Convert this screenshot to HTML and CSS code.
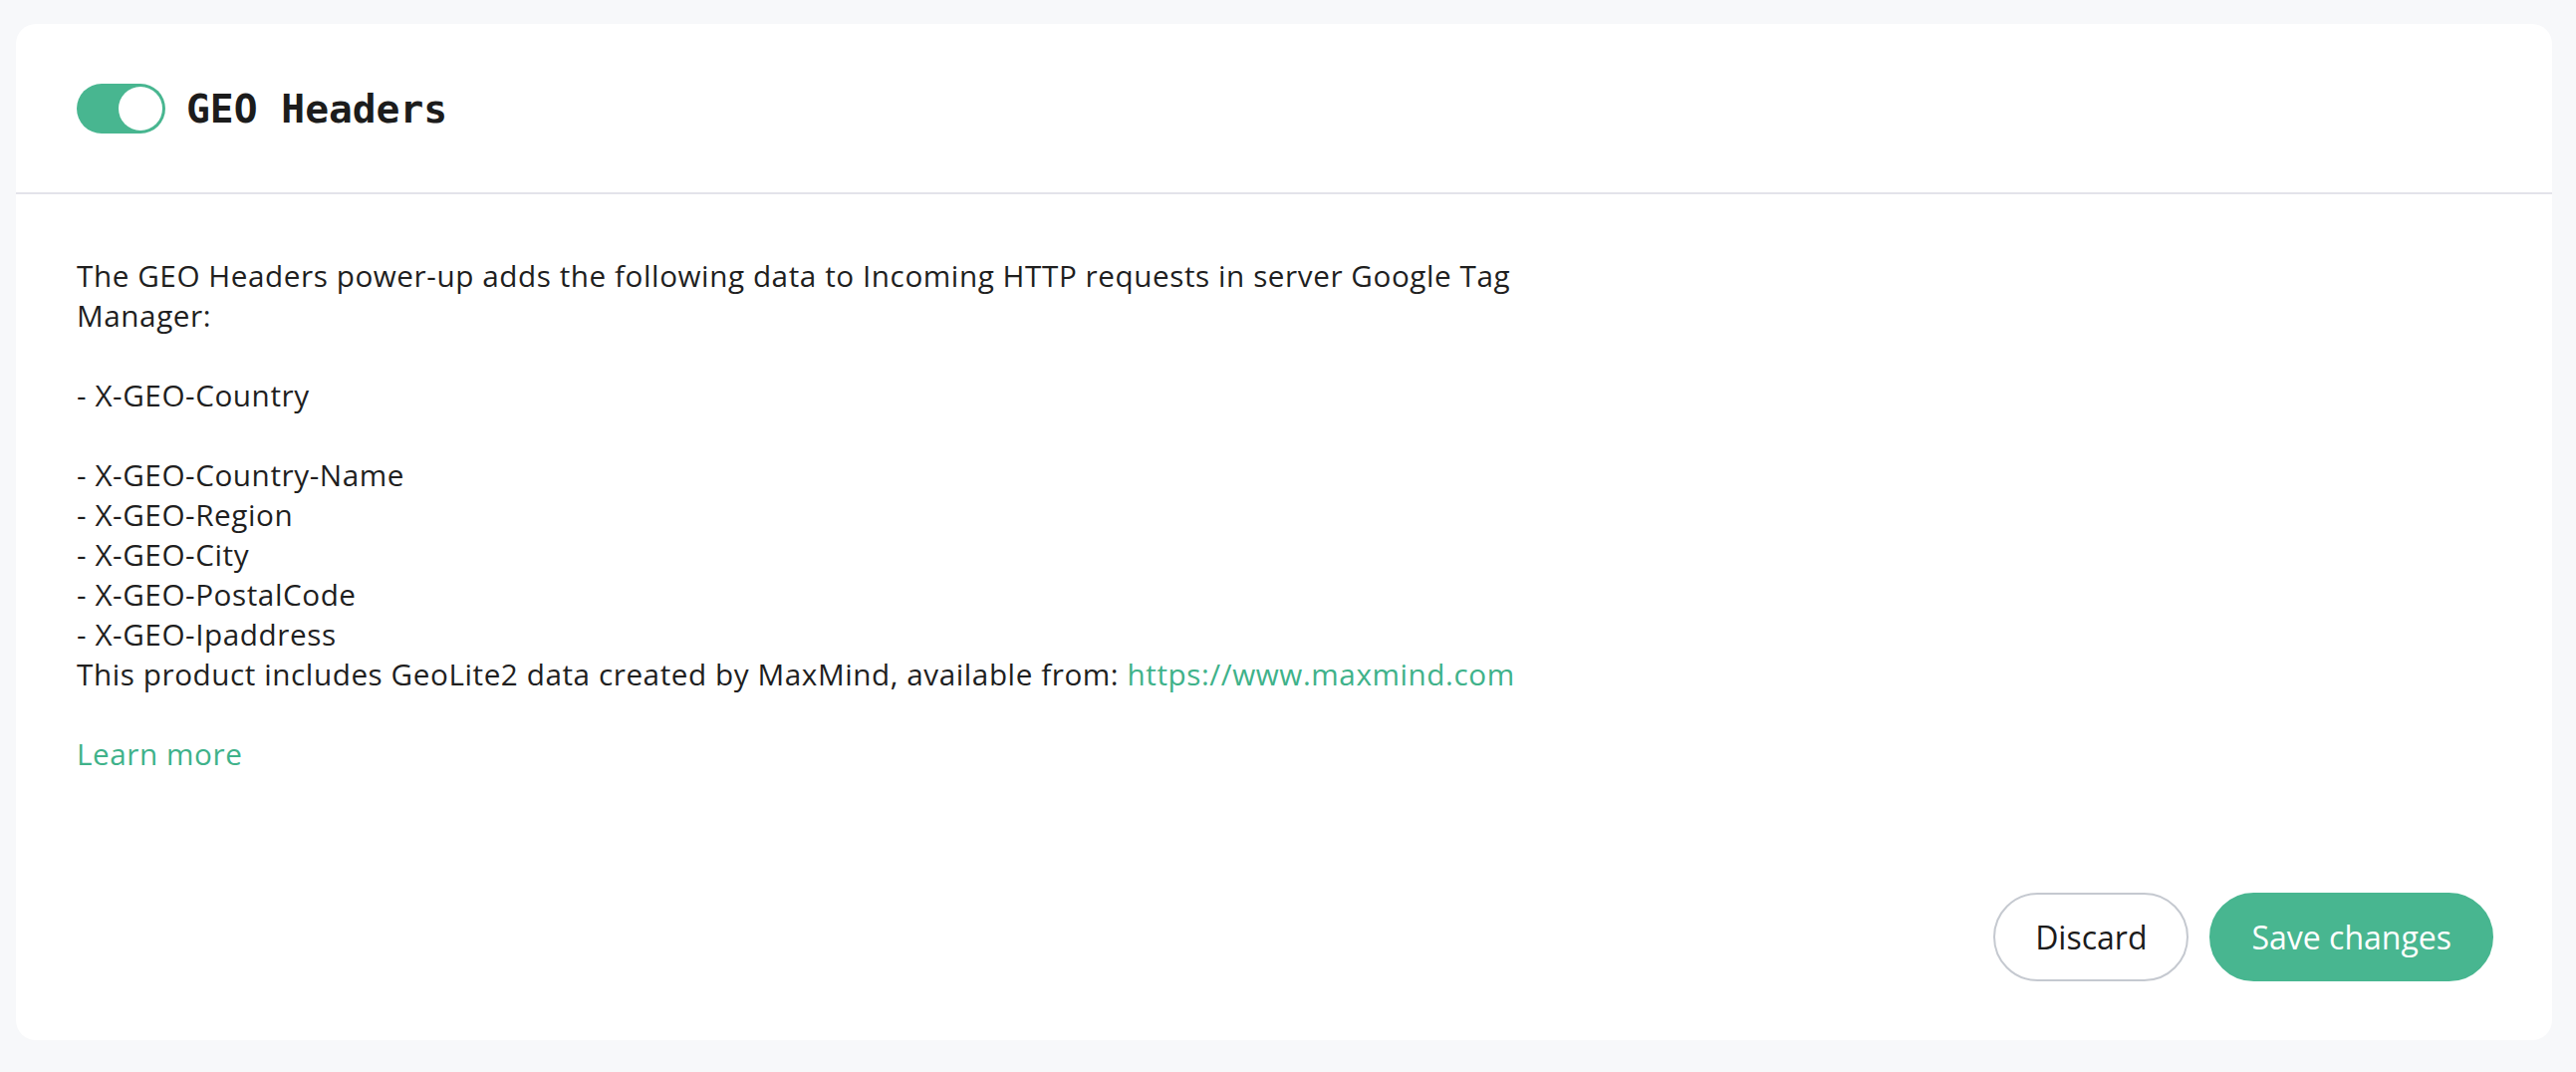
FILE: index.html
```html
<!DOCTYPE html>
<html lang="en">
<head>
<meta charset="utf-8">
<title>GEO Headers</title>
<link rel="stylesheet" href="styles.css">
</head>
<body>
<main class="page">
  <section class="card">
    <header class="card-header">
      <span class="toggle" role="switch" aria-checked="true"><span class="knob"></span></span>
      <h1 class="title">GEO Headers</h1>
    </header>
    <div class="card-body">
      <p class="desc">The GEO Headers power-up adds the following data to Incoming HTTP requests in server Google Tag Manager:

- X-GEO-Country

- X-GEO-Country-Name
- X-GEO-Region
- X-GEO-City
- X-GEO-PostalCode
- X-GEO-Ipaddress
This product includes GeoLite2 data created by MaxMind, available from: <a class="link" href="#">https://www.maxmind.com</a></p>
      <a class="link learn" href="#">Learn more</a>
      <div class="actions">
        <button class="btn btn-outline" type="button">Discard</button>
        <button class="btn btn-primary" type="button">Save changes</button>
      </div>
    </div>
  </section>
</main>
</body>
</html>
```
FILE: styles.css
```css
html, body {
  margin: 0;
  padding: 0;
  background: #f7f8fa;
}
body {
  font-family: "Open Sans", "Noto Sans", sans-serif;
  color: #1f1f1f;
}
.page {
  padding: 24px 24px 32px 16px;
}
.card {
  background: #ffffff;
  border-radius: 20px;
  height: 1020px;
  display: flex;
  flex-direction: column;
}
.card-header {
  display: flex;
  align-items: center;
  gap: 21px;
  padding: 60px 61px 59px;
  border-bottom: 2px solid #e3e3ea;
}
.toggle {
  width: 89px;
  height: 50px;
  border-radius: 25px;
  background: #48b690;
  display: flex;
  align-items: center;
  justify-content: flex-end;
  padding: 3px;
  box-sizing: border-box;
}
.knob {
  width: 44px;
  height: 44px;
  border-radius: 50%;
  background: #ffffff;
}
.title {
  margin: 0;
  font-family: "DejaVu Sans Mono", "Liberation Mono", monospace;
  font-weight: 700;
  font-size: 39.6px;
  line-height: 50px;
  color: #1c1c1c;
}
.card-body {
  flex: 1;
  display: flex;
  flex-direction: column;
  align-items: flex-start;
  padding: 62px 45px 59px 61px;
}
.desc {
  margin: 0;
  max-width: 1495px;
  white-space: pre-line;
  font-size: 29.7px;
  letter-spacing: 0.56px;
  line-height: 40px;
}
.link {
  color: #3fb28a;
  text-decoration: none;
}
.learn {
  margin-top: 40px;
  font-size: 29.7px;
  letter-spacing: 0.56px;
  line-height: 40px;
}
.actions {
  margin-top: auto;
  align-self: stretch;
  display: flex;
  justify-content: flex-end;
  gap: 21px;
  padding-right: 14px;
}
.btn {
  height: 89px;
  border-radius: 45px;
  padding: 0 40px;
  font-family: "Open Sans", "Noto Sans", sans-serif;
  font-size: 32px;
  font-weight: 500;
  cursor: pointer;
}
.btn-outline {
  background: #ffffff;
  color: #1c1c1c;
  border: 2px solid #c5c9d0;
}
.btn-primary {
  background: #48b690;
  color: #ffffff;
  border: 2px solid #48b690;
}
```
